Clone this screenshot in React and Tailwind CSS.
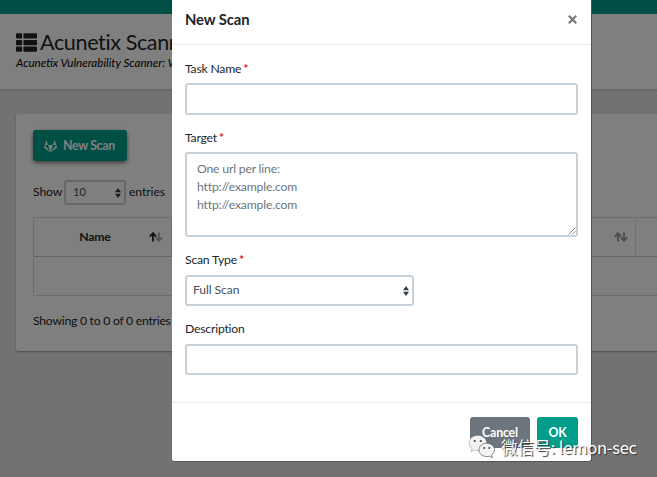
import React from "react";
import { FaThList, FaGitlab } from "react-icons/fa";

function SortArrows({ active }) {
  return (
    <svg width="14" height="10" viewBox="0 0 14 10" fill="none" strokeWidth="1.8">
      <path d="M4 9.6V1.4M0.8 4.6L4 1.2L7.2 4.6" stroke={active ? "#212529" : "#95979b"} />
      <path d="M10 0.4V8.6M6.8 5.4L10 8.8L13.2 5.4" stroke={active ? "#a5a7aa" : "#95979b"} />
    </svg>
  );
}

function Caret() {
  return (
    <svg width="6" height="10" viewBox="0 0 6 10" fill="#343a40">
      <path d="M3 0L6 4.3H0zM3 10L6 5.7H0z" />
    </svg>
  );
}

function Label({ children, required }) {
  return (
    <div className="h-[18px] text-[12.2px] leading-[18px] tracking-[-0.2px] text-[#212529]">
      {children}
      {required && <span className="ml-[2px] font-bold text-[#e8112d]">*</span>}
    </div>
  );
}

function Page() {
  return (
    <div className="h-[477px] w-[900px] bg-[#e5e5e5]">
      <div className="h-[14px] bg-[#009e8a]" />
      <header className="h-[75px] bg-white pt-4 pl-4 shadow-[0_1px_2px_rgba(0,0,0,0.15)]">
        <h1 className="flex h-6 items-center gap-[3px] text-[21.6px] leading-6 tracking-[-0.4px] text-[#212529]">
          <FaThList className="h-[21px] w-[21px]" />
          Acunetix Scanner
        </h1>
        <p className="mt-px h-4 text-[11.6px] leading-4 text-black italic">
          Acunetix Vulnerability Scanner: Web Application Security
        </p>
      </header>
      <main className="mt-[25px] ml-4 h-[237px] rounded-[3px] bg-white pt-4 pl-[17px] shadow-[0_1px_2px_rgba(0,0,0,0.35)]">
        <button className="flex h-[31px] w-[94px] items-center gap-[6px] rounded-[3px] bg-[#009e8a] pl-[11px] text-[12.3px] font-bold tracking-[-0.3px] text-white shadow-[0_2px_4px_rgba(0,0,0,0.5)]">
          <FaGitlab className="mt-0.5 h-[13px] w-[13px]" />
          <span className="mt-px">New Scan</span>
        </button>
        <div className="mt-[19px] flex h-[25px] items-center text-[12.2px] tracking-[-0.1px] text-[#212529]">
          <span className="w-[31px]">Show</span>
          <span className="flex h-[25px] w-[62px] items-center justify-between rounded-[3px] border-2 border-[#c8d1da] pr-[3px] pl-[7px] text-[11.2px] text-[#495057]">
            10
            <Caret />
          </span>
          <span className="ml-[3px]">entries</span>
        </div>
        <div className="mt-3 w-[800px] border border-[#d8dbde]">
          <div className="flex h-[39px] border-b border-[#c4c7ca] text-[12.2px] font-bold tracking-[-0.2px] text-[#212529]">
            <div className="flex w-[138px] items-center border-r border-[#dee2e6] pr-[8px]">
              <span className="flex-1 pl-[7px] text-center">Name</span>
              <SortArrows active />
            </div>
            <div className="flex w-[464px] items-center justify-end border-r border-[#dee2e6] pr-[7px]">
              <SortArrows />
            </div>
          </div>
          <div className="h-[38px]" />
        </div>
        <div className="mt-[16px] h-[18px] text-[12.2px] leading-[18px] tracking-[-0.25px] text-[#212529]">
          Showing 0 to 0 of 0 entries
        </div>
      </main>
    </div>
  );
}

function Modal() {
  return (
    <div className="absolute top-0 left-[172px] flex h-[462px] w-[420px] flex-col rounded-b-[3px] border-r border-b border-[#555] bg-white">
      <div className="flex h-[45px] items-start justify-between border-b border-[#e9ecef] pr-[14px] pl-[13px]">
        <h2 className="mt-[8px] text-[14.8px] leading-[22px] font-bold tracking-[-0.1px] text-[#212529]">New Scan</h2>
        <svg className="mt-[15px]" width="9" height="9" viewBox="0 0 9 9" stroke="#777" strokeWidth="2.2">
          <path d="M0.8 0.8L8.2 8.2M8.2 0.8L0.8 8.2" />
        </svg>
      </div>
      <div className="flex h-[358px] flex-col border-b border-[#e9ecef] pt-[15px] pr-[13px] pl-[13px]">
        <Label required>Task Name</Label>
        <div className="mt-[5px] h-[32px] shrink-0 rounded-[3px] border-2 border-[#c8d1da]" />
        <div className="mt-[14px]">
          <Label required>Target</Label>
        </div>
        <div className="relative mt-[5px] h-[85px] shrink-0 rounded-[3px] border-2 border-[#c8d1da] pt-[6px] pl-[10px] text-[12.2px] leading-[17.9px] tracking-[-0.18px] text-[#6c757d]">
          One url per line:
          <br />
          http://example.com
          <br />
          http://example.com
          <svg className="absolute right-0 bottom-0" width="8" height="8" viewBox="0 0 8 8" stroke="#777" strokeWidth="0.9">
            <path d="M0.5 7.5L7.5 0.5M4 7.5L7.5 4" />
          </svg>
        </div>
        <div className="mt-[14px]">
          <Label required>Scan Type</Label>
        </div>
        <div className="mt-[6px] flex h-[31px] w-[229px] shrink-0 items-center justify-between rounded-[3px] border-2 border-[#c8d1da] pr-[3px] pl-[6px] text-[12.2px] tracking-[-0.1px] text-[#495057]">
          Full Scan
          <Caret />
        </div>
        <div className="mt-[14px]">
          <Label>Description</Label>
        </div>
        <div className="mt-[6px] h-[31px] shrink-0 rounded-[3px] border-2 border-[#c8d1da]" />
      </div>
      <div className="flex justify-end gap-[7px] pt-[14px] pr-[13px] text-[12.3px] font-bold tracking-[-0.15px] text-white">
        <button className="h-[31px] w-[60px] rounded-[3px] bg-[#6c757d] pt-px">Cancel</button>
        <button className="h-[31px] w-[41px] rounded-[3px] bg-[#009e8a] pt-px">OK</button>
      </div>
    </div>
  );
}

function Watermark() {
  return (
    <div className="absolute top-[434px] left-[468px] flex items-start">
      <svg width="28" height="26" viewBox="0 0 28 26">
        <path d="M9.8 1.5C4.8 1.5 1 4.8 1 9c0 2.4 1.2 4.4 3.2 5.8l-1 3 3.4-1.7c1 .3 2.1.4 3.2.4 5 0 8.8-3.3 8.8-7.5S14.8 1.5 9.8 1.5z" fill="#f2f2f2" stroke="#888" strokeWidth="0.5" />
        <path d="M18.8 9.2c-4.5 0-7.8 3-7.8 6.700s3.300 6.700 7.800 6.700c1 0 1.900-.1 2.700-.4l2.900 1.500-.8-2.600c1.800-1.200 2.900-3 2.900-5.200 0-3.700-3.300-6.700-7.700-6.700z" fill="#f5f5f5" stroke="#555" strokeWidth="0.7" />
        <g fill="#444">
          <circle cx="6.7" cy="7" r="1.1" />
          <circle cx="12.8" cy="7" r="1.1" />
          <circle cx="16.2" cy="14" r="1" />
          <circle cx="21.3" cy="14" r="1" />
        </g>
      </svg>
      <span className="mt-px ml-[5px] font-['Noto_Sans_CJK_SC',sans-serif] text-[16.6px] leading-[24px] whitespace-nowrap text-white [text-shadow:1px_1px_1px_#333]">
        微信号:<span className="tracking-[-0.3px]"> lemon-sec</span>
      </span>
    </div>
  );
}

export default function App() {
  return (
    <div className="relative h-[477px] w-[657px] overflow-hidden font-[Lato,sans-serif]">
      <Page />
      <div className="absolute inset-0 bg-black/50" />
      <Modal />
      <Watermark />
    </div>
  );
}
